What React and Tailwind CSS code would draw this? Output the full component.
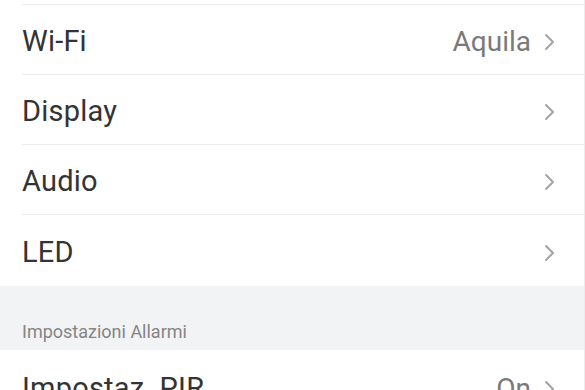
import React from 'react';

function Chevron() {
  return (
    <svg width="12" height="18" viewBox="0 0 12 18" className="shrink-0">
      <polyline points="3,2 10,9 3,16" fill="none" stroke="#a3a3a3" strokeWidth="2" strokeLinecap="round" strokeLinejoin="round" />
    </svg>
  );
}

function Row({ label, value, height = 'h-[70px]', top = 'pt-[4px]' }) {
  return (
    <div className={`flex items-center ${height} pl-[22px] pr-[29px] ${top}`}>
      <span className="flex-1 text-[29px] text-[#333333] tracking-[0.2px]">{label}</span>
      <div className="flex items-center gap-[12px]">
        {value && <span className="text-[28px] text-[#7a7a7a]">{value}</span>}
        <Chevron />
      </div>
    </div>
  );
}

export default function App() {
  const rows = [
    { label: 'Wi-Fi', value: 'Aquila' },
    { label: 'Display' },
    { label: 'Audio' },
    { label: 'LED' },
  ];

  return (
    <div className="w-[585px] h-[390px] overflow-hidden bg-white border-r border-[#ececec]" style={{ fontFamily: 'Roboto, "Noto Sans", sans-serif' }}>
      <div className="h-[4px]" />
      <div>
        {rows.map((r, i) => (
          <div key={r.label} className="ml-[22px] border-t border-[#ececec]">
            <div className="-ml-[22px]">
              <Row label={r.label} value={r.value} height={i === 3 ? 'h-[71px]' : 'h-[69px]'} />
            </div>
          </div>
        ))}
      </div>
      <div className="bg-[#f2f3f5] h-[64px] flex items-end pl-[22px] pb-[5px]">
        <span className="text-[18px] text-[#858585]">Impostazioni Allarmi</span>
      </div>
      <Row label="Impostaz. PIR" value="On" top="pt-[8px]" />
    </div>
  );
}
